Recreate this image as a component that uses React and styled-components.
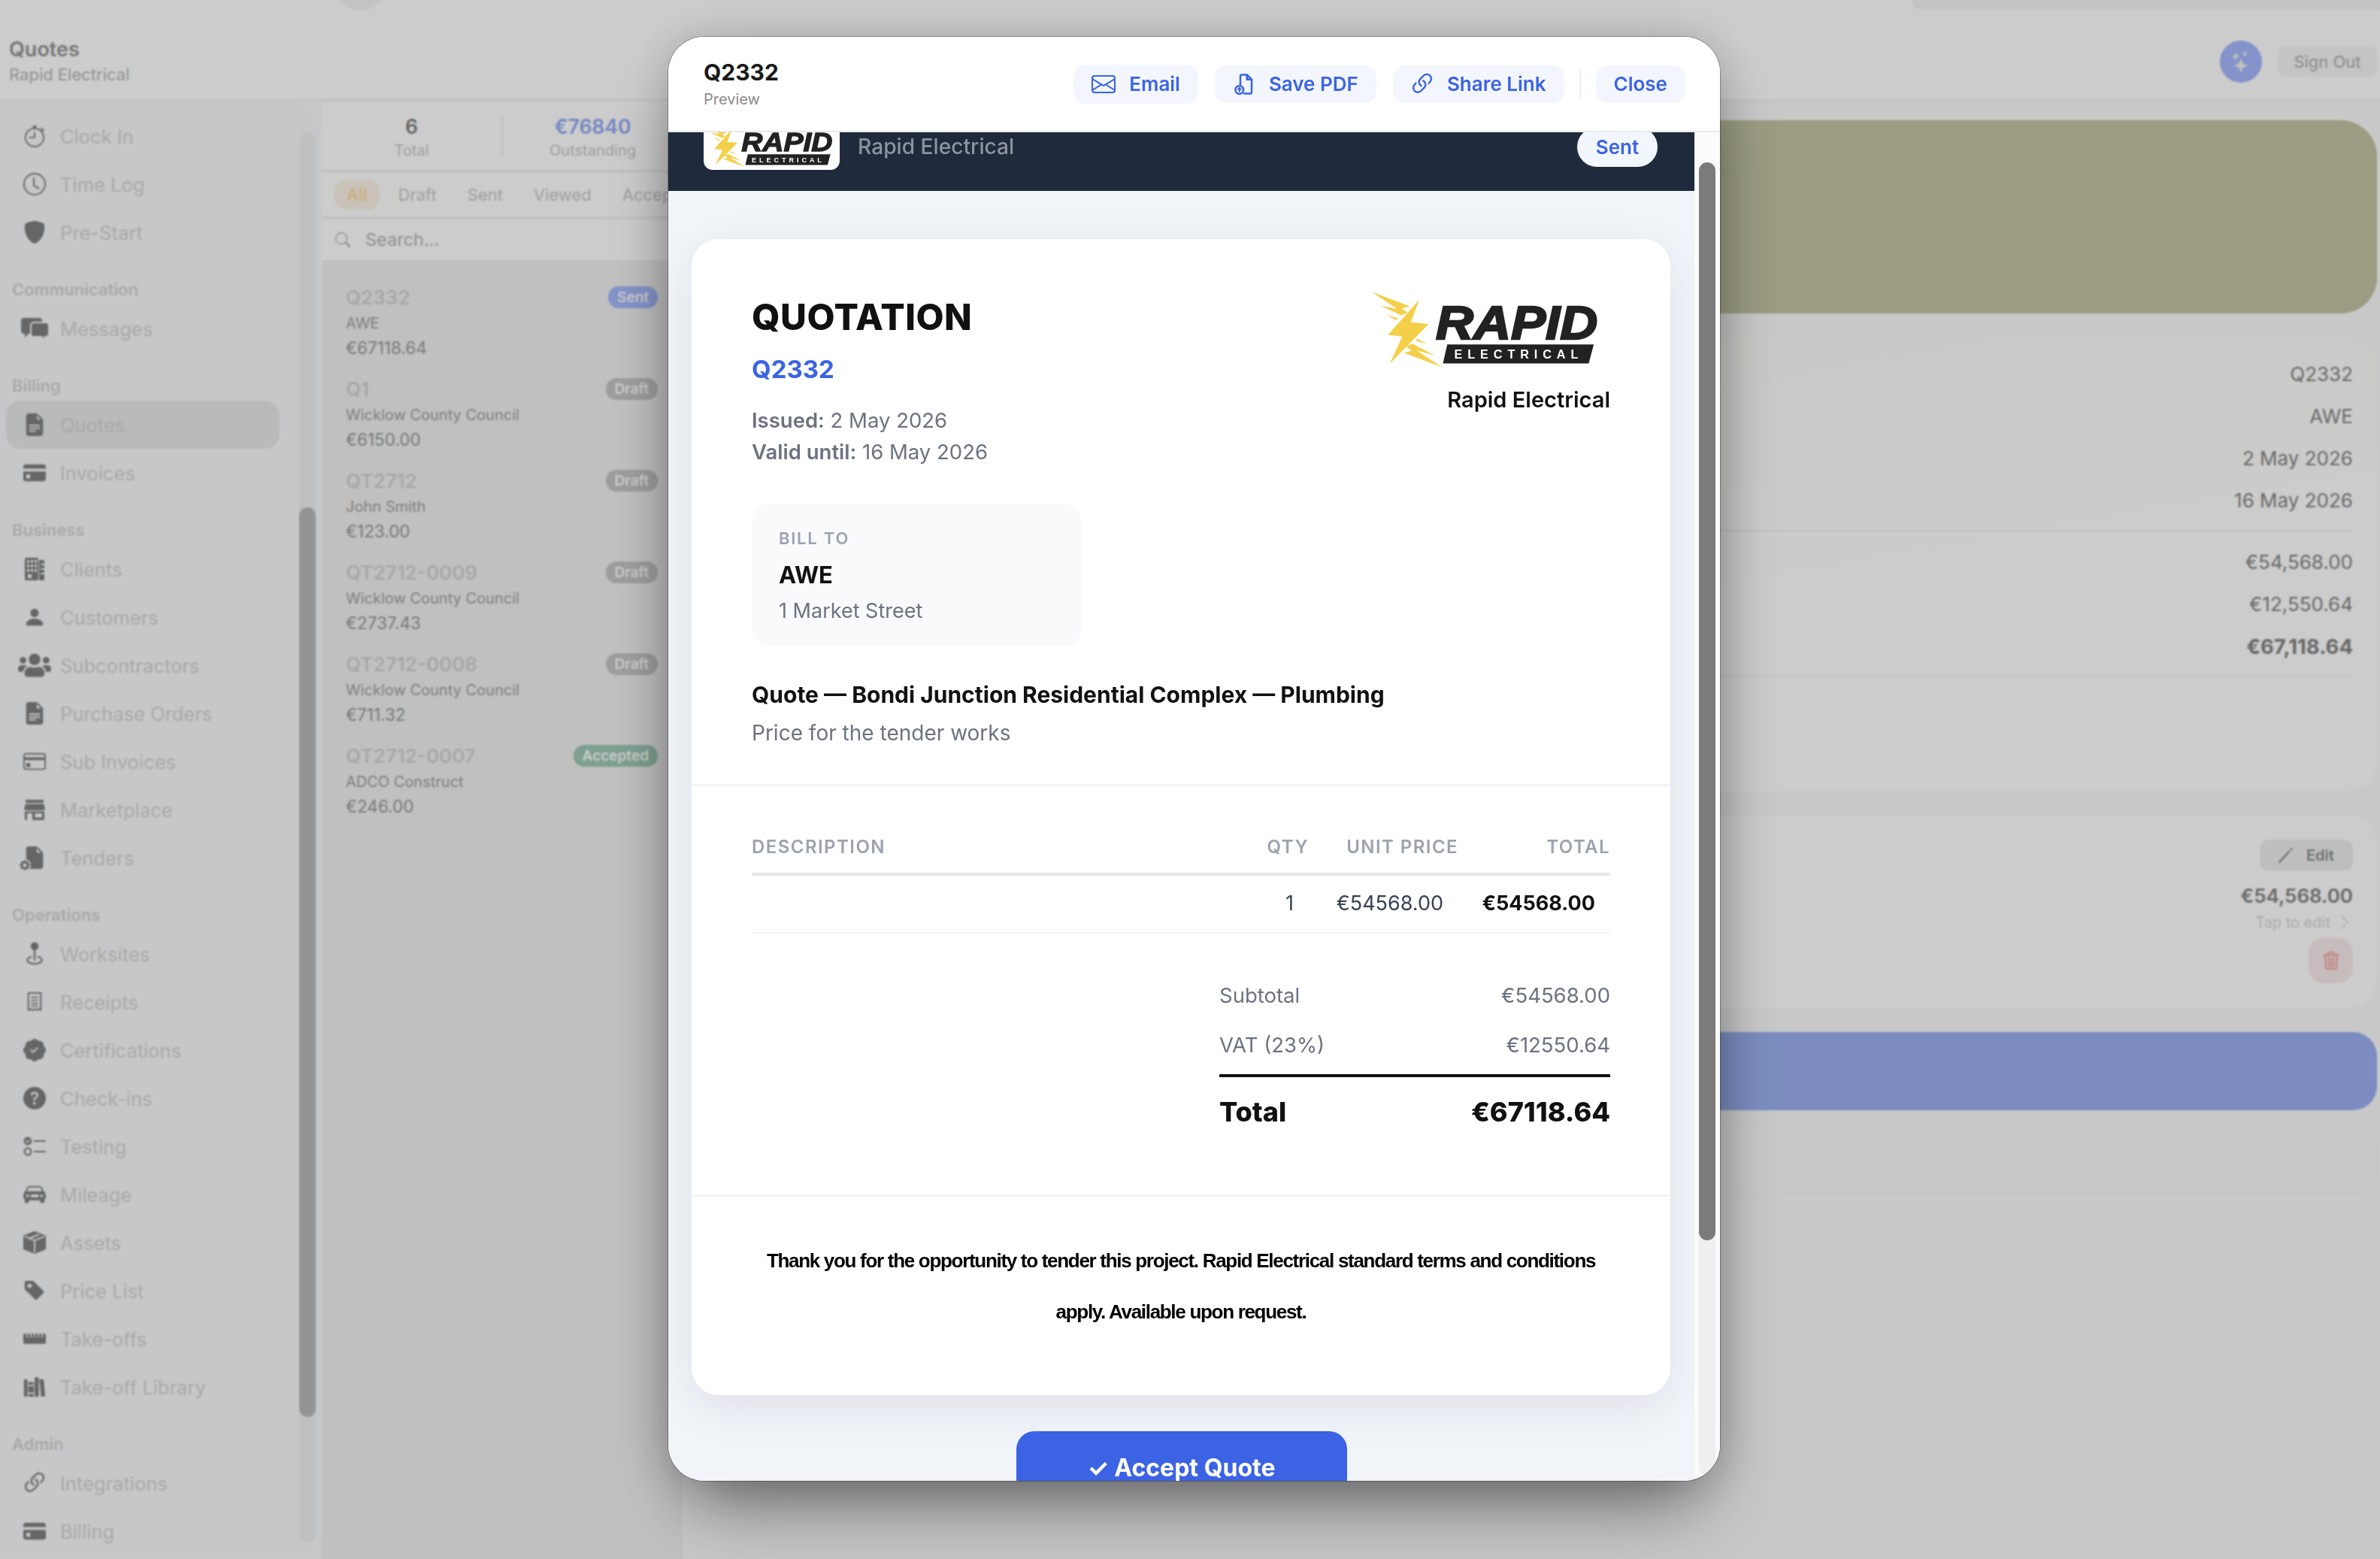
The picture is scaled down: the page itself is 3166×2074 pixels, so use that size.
import React from "react";
import styled, { createGlobalStyle } from "styled-components";
import {
  BsStopwatch,
  BsClock,
  BsShieldFill,
  BsFileEarmarkTextFill,
  BsCreditCardFill,
  BsPersonFill,
  BsCreditCard,
  BsFileEarmarkFill,
  BsGearFill,
  BsPatchCheckFill,
  BsQuestionCircleFill,
  BsCarFrontFill,
  BsBoxSeamFill,
  BsTagFill,
  BsLink45Deg,
  BsSearch,
  BsStars,
  BsTrash3,
  BsChevronRight,
  BsEnvelope,
} from "react-icons/bs";
import { FaUsers, FaRulerHorizontal } from "react-icons/fa";
import { IoLibrary } from "react-icons/io5";

const SIDE_BG = "#f8f9fa";

const TenderIcon = () => (
  <TenderWrap>
    <BsFileEarmarkFill />
    <TenderGear>
      <BsGearFill />
    </TenderGear>
  </TenderWrap>
);

const ChatIcon = () => (
  <svg width="37" height="29" viewBox="0 0 37 29" fill="currentColor">
    <path d="M4 0h20a4 4 0 0 1 4 4v13a4 4 0 0 1-4 4H10l-5 5v-5H4a4 4 0 0 1-4-4V4a4 4 0 0 1 4-4z" />
    <path
      d="M17 6h16a4 4 0 0 1 4 4v11a4 4 0 0 1-4 4h-1v4l-5-4H17a4 4 0 0 1-4-4V10a4 4 0 0 1 4-4z"
      stroke={SIDE_BG}
      strokeWidth="2"
    />
  </svg>
);

const BuildingIcon = () => (
  <svg width="26" height="30" viewBox="0 0 26 30" fill="currentColor">
    <rect x="0" y="0" width="18" height="30" rx="2" />
    <rect x="19" y="3" width="7" height="27" rx="1.5" />
    <g fill={SIDE_BG}>
      {[3, 8, 13].map((x) =>
        [3, 9, 15].map((y) => <rect key={`${x}-${y}`} x={x} y={y} width="3" height="3.6" />)
      )}
      <rect x="4" y="22" width="5" height="5" />
      <rect x="21.5" y="8" width="4.5" height="2" />
      <rect x="21.5" y="14" width="4.5" height="2" />
      <rect x="21.5" y="20" width="4.5" height="2" />
    </g>
  </svg>
);

const StoreIcon = () => (
  <svg width="28" height="27" viewBox="0 0 28 27" fill="currentColor">
    <rect x="2" y="0" width="24" height="4" rx="1" />
    <path d="M2 5.5h24l2 6.5a3 3 0 0 1-4.7 1.6 3.6 3.6 0 0 1-4.7 0 3.6 3.6 0 0 1-4.6 0 3.6 3.6 0 0 1-4.7 0 3.6 3.6 0 0 1-4.6 0A3 3 0 0 1 0 12z" />
    <path fillRule="evenodd" d="M1 15.5h26V25a2 2 0 0 1-2 2H3a2 2 0 0 1-2-2zM4 18v9h7v-9zM14.5 18v5.5H24V18z" />
  </svg>
);

const PinIcon = () => (
  <svg width="28" height="32" viewBox="0 0 24 28" fill="none" stroke="currentColor" strokeWidth="2" strokeLinecap="round">
    <circle cx="12" cy="5" r="3.6" fill="currentColor" />
    <path d="M12 8.5V21" />
    <path d="M8 17.5c-3 .7-4.5 2-4.5 3.7 0 2.5 3.8 4.3 8.5 4.3s8.5-1.8 8.5-4.3c0-1.7-1.5-3-4.5-3.7" />
  </svg>
);

const ReceiptIcon = () => (
  <svg width="22" height="28" viewBox="0 0 24 30" fill="none" stroke="currentColor" strokeWidth="2.2" strokeLinejoin="round">
    <path d="M3 2h18v25l-3-2-3 2-3-2-3 2-3-2-3 2z" />
    <path d="M7 8h10M7 12.5h10M7 17h10M7 21h10" strokeWidth="1.8" />
  </svg>
);

const ChecksIcon = () => (
  <svg width="30" height="26" viewBox="0 0 30 26" fill="none" stroke="currentColor" strokeWidth="2.2" strokeLinecap="round">
    <circle cx="6" cy="6" r="5.4" fill="currentColor" stroke="none" />
    <path d="M3.6 6l1.9 1.9 3-3.4" stroke={SIDE_BG} strokeWidth="1.5" />
    <path d="M15 6h14M15 20h14" />
    <circle cx="6" cy="20" r="4.4" />
  </svg>
);

const navSections = [
  {
    items: [
      ["Clock In", <BsStopwatch />],
      ["Time Log", <BsClock />],
      ["Pre-Start", <BsShieldFill />],
    ],
  },
  { label: "Communication", items: [["Messages", <ChatIcon />]] },
  {
    label: "Billing",
    items: [
      ["Quotes", <BsFileEarmarkTextFill />, true],
      ["Invoices", <BsCreditCardFill />],
    ],
  },
  {
    label: "Business",
    items: [
      ["Clients", <BuildingIcon />],
      ["Customers", <BsPersonFill />],
      ["Subcontractors", <FaUsers style={{ fontSize: 48 }} />],
      ["Purchase Orders", <BsFileEarmarkTextFill />],
      ["Sub Invoices", <BsCreditCard />],
      ["Marketplace", <StoreIcon />],
      ["Tenders", <TenderIcon />],
    ],
  },
  {
    label: "Operations",
    items: [
      ["Worksites", <PinIcon />],
      ["Receipts", <ReceiptIcon />],
      ["Certifications", <BsPatchCheckFill />],
      ["Check-ins", <BsQuestionCircleFill />],
      ["Testing", <ChecksIcon />],
      ["Mileage", <BsCarFrontFill />],
      ["Assets", <BsBoxSeamFill />],
      ["Price List", <BsTagFill />],
      ["Take-offs", <FaRulerHorizontal />],
      ["Take-off Library", <IoLibrary />],
    ],
  },
  {
    label: "Admin",
    items: [
      ["Integrations", <BsLink45Deg style={{ fontSize: 38 }} />],
      ["Billing", <BsCreditCardFill />],
    ],
  },
];

const quotes = [
  { ref: "Q2332", client: "AWE", amount: "€67118.64", status: "Sent" },
  { ref: "Q1", client: "Wicklow County Council", amount: "€6150.00", status: "Draft" },
  { ref: "QT2712", client: "John Smith", amount: "€123.00", status: "Draft" },
  { ref: "QT2712-0009", client: "Wicklow County Council", amount: "€2737.43", status: "Draft" },
  { ref: "QT2712-0008", client: "Wicklow County Council", amount: "€711.32", status: "Draft" },
  { ref: "QT2712-0007", client: "ADCO Construct", amount: "€246.00", status: "Accepted" },
];

const badgeColors = { Sent: "#a5b9fd", Draft: "#c6c6c6", Accepted: "#9ec9b3" };

const Logo = ({ width }) => (
  <svg width={width} viewBox="130 75 955 320" style={{ display: "block" }}>
    <g fill="#f4cf4a">
      <polygon points="330,115 205,255 262,262 213,368 367,212 296,205" />
      <polygon points="140,85 292,142 260,150 283,167 258,178 176,140 243,152" />
      <polygon points="200,175 245,190 238,198" />
      <polygon points="420,383 268,326 300,318 277,301 302,290 392,337 317,316" />
      <polygon points="360,293 315,278 322,270" />
    </g>
    <text
      x="395"
      y="270"
      fontFamily="'Liberation Sans', sans-serif"
      fontWeight="700"
      fontStyle="italic"
      fontSize="188"
      textLength="640"
      lengthAdjust="spacingAndGlyphs"
      fill="#222"
      stroke="#222"
      strokeWidth="7"
    >
      RAPID
    </text>
    <polygon points="440,293 1020,293 1000,368 423,368" fill="#222" />
    <text
      x="468"
      y="349"
      fontFamily="'Liberation Sans', sans-serif"
      fontWeight="700"
      fontSize="48"
      textLength="490"
      fill="#fff"
    >
      ELECTRICAL
    </text>
  </svg>
);

const SavePdfIcon = () => (
  <svg width="30" height="30" viewBox="0 0 24 24" fill="none" stroke="currentColor" strokeWidth="2" strokeLinecap="round" strokeLinejoin="round">
    <path d="M8 13V3.5A1.5 1.5 0 0 1 9.5 2H15l5 5v13.5a1.5 1.5 0 0 1-1.5 1.5H12" />
    <path d="M15 2v5h5" />
    <circle cx="7" cy="18" r="4.3" />
    <path d="M7 20v-4M5.5 17.5L7 16l1.5 1.5" strokeWidth="1.5" />
  </svg>
);

const PencilIcon = () => (
  <svg width="24" height="24" viewBox="0 0 24 24" fill="none" stroke="currentColor" strokeWidth="2.4" strokeLinecap="round">
    <path d="M4 21L17 7" />
    <path d="M19.5 4.2l.8-.9" />
  </svg>
);

export default function App() {
  return (
    <>
      <GlobalStyle />
      <Page>
        <TopBar>
          <div>
            <PageTitle>Quotes</PageTitle>
            <PageSub>Rapid Electrical</PageSub>
          </div>
          <TopActions>
            <AiButton>
              <BsStars />
            </AiButton>
            <SignOut>Sign Out</SignOut>
          </TopActions>
        </TopBar>

        <Workspace>
          <Sidebar>
            <NavList>
              {navSections.map((section, i) => (
                <section key={i}>
                  {section.label && <NavLabel>{section.label}</NavLabel>}
                  {section.items.map(([name, icon, active]) => (
                    <NavItem key={name} $active={active}>
                      <NavIcon>{icon}</NavIcon>
                      {name}
                    </NavItem>
                  ))}
                </section>
              ))}
            </NavList>
            <SideTrack>
              <SideThumb />
            </SideTrack>
          </Sidebar>

          <ListPanel>
            <Stats>
              <Stat>
                <StatValue>6</StatValue>
                <StatLabel>Total</StatLabel>
              </Stat>
              <StatDivider />
              <Stat>
                <StatValue $blue>€76840</StatValue>
                <StatLabel>Outstanding</StatLabel>
              </Stat>
            </Stats>
            <Filters>
              <Filter $active>All</Filter>
              <Filter>Draft</Filter>
              <Filter>Sent</Filter>
              <Filter>Viewed</Filter>
              <Filter>Accepted</Filter>
            </Filters>
            <SearchRow>
              <BsSearch />
              Search...
            </SearchRow>
            <QuoteList>
              {quotes.map((q) => (
                <QuoteItem key={q.ref}>
                  <QuoteHead>
                    <QuoteRef>{q.ref}</QuoteRef>
                    <Badge $bg={badgeColors[q.status]}>{q.status}</Badge>
                  </QuoteHead>
                  <QuoteClient>{q.client}</QuoteClient>
                  <QuoteAmount>{q.amount}</QuoteAmount>
                </QuoteItem>
              ))}
            </QuoteList>
          </ListPanel>

          <Main>
            <Hero />
            <InfoCard>
              <InfoRow>Q2332</InfoRow>
              <InfoRow>AWE</InfoRow>
              <InfoRow>2 May 2026</InfoRow>
              <InfoRow>16 May 2026</InfoRow>
              <InfoDivider />
              <InfoRow>€54,568.00</InfoRow>
              <InfoRow>€12,550.64</InfoRow>
              <InfoRow $bold>€67,118.64</InfoRow>
              <InfoDivider />
            </InfoCard>
            <LineCard>
              <EditButton>
                <PencilIcon />
                Edit
              </EditButton>
              <LinePrice>€54,568.00</LinePrice>
              <TapHint>
                Tap to edit <BsChevronRight />
              </TapHint>
              <DeleteButton>
                <BsTrash3 />
              </DeleteButton>
            </LineCard>
            <BlueBar />
            <GhostCard />
          </Main>
        </Workspace>
      </Page>

      <Overlay>
        <Modal>
          <ModalHeader>
            <div>
              <ModalTitle>Q2332</ModalTitle>
              <ModalSub>Preview</ModalSub>
            </div>
            <ModalActions>
              <ActionButton>
                <BsEnvelope />
                Email
              </ActionButton>
              <ActionButton>
                <SavePdfIcon />
                Save PDF
              </ActionButton>
              <ActionButton>
                <LinkGlyph>
                  <BsLink45Deg />
                </LinkGlyph>
                Share Link
              </ActionButton>
              <ActionDivider />
              <ActionButton>Close</ActionButton>
            </ModalActions>
          </ModalHeader>

          <ModalBody>
            <Scroller>
              <Banner>
                <LogoTile>
                  <Logo width={181} />
                </LogoTile>
                <BannerName>Rapid Electrical</BannerName>
                <StatusPill>Sent</StatusPill>
              </Banner>

              <QuoteCard>
                <CardTop>
                  <TopRow>
                    <div>
                      <DocTitle>QUOTATION</DocTitle>
                      <DocRef>Q2332</DocRef>
                      <DocMeta>
                        <b>Issued:</b> 2 May 2026
                        <br />
                        <b>Valid until:</b> 16 May 2026
                      </DocMeta>
                    </div>
                    <Issuer>
                      <Logo width={321} />
                      <IssuerName>Rapid Electrical</IssuerName>
                    </Issuer>
                  </TopRow>
                  <BillBox>
                    <BillLabel>BILL TO</BillLabel>
                    <BillName>AWE</BillName>
                    <BillAddress>1 Market Street</BillAddress>
                  </BillBox>
                  <JobTitle>Quote — Bondi Junction Residential Complex — Plumbing</JobTitle>
                  <JobDesc>Price for the tender works</JobDesc>
                </CardTop>

                <CardMiddle>
                  <TableHead>
                    <span>DESCRIPTION</span>
                    <HeadNum>QTY</HeadNum>
                    <HeadNum>UNIT PRICE</HeadNum>
                    <HeadNum>TOTAL</HeadNum>
                  </TableHead>
                  <TableRow>
                    <span />
                    <RowNum>1</RowNum>
                    <RowNum>€54568.00</RowNum>
                    <RowNum $strong>€54568.00</RowNum>
                  </TableRow>
                  <Totals>
                    <TotalLine>
                      <span>Subtotal</span>
                      <span>€54568.00</span>
                    </TotalLine>
                    <TotalLine>
                      <span>VAT (23%)</span>
                      <span>€12550.64</span>
                    </TotalLine>
                    <GrandTotal>
                      <span>Total</span>
                      <span>€67118.64</span>
                    </GrandTotal>
                  </Totals>
                </CardMiddle>

                <CardFooter>
                  Thank you for the opportunity to tender this project. Rapid Electrical standard terms and
                  conditions apply. Available upon request.
                </CardFooter>
              </QuoteCard>

              <AcceptButton>✓ Accept Quote</AcceptButton>
            </Scroller>

            <Gutter>
              <GutterTrack>
                <GutterThumb />
              </GutterTrack>
            </Gutter>
          </ModalBody>
        </Modal>
      </Overlay>
    </>
  );
}

const GlobalStyle = createGlobalStyle`
  html, body {
    margin: 0;
    height: 100%;
    overflow: hidden;
    background: #fafafa;
    font-family: Inter, "Noto Sans", sans-serif;
  }
  * {
    box-sizing: border-box;
  }
`;

const Page = styled.div`
  display: flex;
  flex-direction: column;
  height: 100vh;
`;

const TopBar = styled.header`
  position: relative;
  flex: none;
  display: flex;
  align-items: center;
  justify-content: space-between;
  height: 135px;
  padding: 32px 4px 0 12px;
  background: #fff;
  border-bottom: 3px solid #f2f2f2;

  &::before {
    content: "";
    position: absolute;
    top: -56px;
    left: 445px;
    width: 70px;
    height: 70px;
    border-radius: 50%;
    background: #f4f4f4;
  }

  &::after {
    content: "";
    position: absolute;
    top: 0;
    right: 0;
    width: 623px;
    height: 13px;
    border-radius: 0 0 0 26px;
    background: #f6f6f6;
  }
`;

const PageTitle = styled.div`
  font-size: 27px;
  line-height: 34px;
  font-weight: 600;
  color: #949494;
`;

const PageSub = styled.div`
  font-size: 22px;
  line-height: 32px;
  color: #b7b7b7;
`;

const TopActions = styled.div`
  display: flex;
  align-items: center;
  gap: 21px;
`;

const AiButton = styled.div`
  display: flex;
  align-items: center;
  justify-content: center;
  width: 56px;
  height: 56px;
  border-radius: 50%;
  background: #a5b9fd;
  color: #f0f0f0;
  font-size: 28px;
`;

const SignOut = styled.div`
  width: 132px;
  height: 40px;
  border-radius: 10px;
  background: #f5f5f5;
  color: #aeaeae;
  font-size: 22px;
  line-height: 40px;
  text-align: center;
`;

const Workspace = styled.div`
  flex: 1;
  display: flex;
  min-height: 0;
`;

const Sidebar = styled.aside`
  flex: none;
  display: flex;
  width: 428px;
  height: 1935px;
  padding-top: 14px;
  background: ${SIDE_BG};
  border-right: 2px solid #fcfcfd;
  border-radius: 0 40px 40px 0;
  overflow: hidden;
`;

const NavList = styled.nav`
  flex: 1;
  min-width: 0;
  padding: 0 26px 0 8px;
`;

const NavLabel = styled.div`
  height: 40px;
  margin-top: 24px;
  padding-left: 8px;
  color: #d3d4d4;
  font-size: 22px;
  font-weight: 600;
  line-height: 40px;
  white-space: nowrap;
`;

const NavItem = styled.div`
  display: flex;
  align-items: center;
  gap: 12px;
  height: 64px;
  padding-left: 16px;
  border-radius: 20px;
  background: ${(p) => (p.$active ? "#e8e9e9" : "transparent")};
  color: #d3d4d4;
  font-size: 25.5px;
  white-space: nowrap;
`;

const NavIcon = styled.span`
  flex: none;
  display: flex;
  align-items: center;
  justify-content: center;
  width: 44px;
  color: #808080;
  font-size: 30px;
`;

const TenderWrap = styled.span`
  position: relative;
  display: flex;
`;

const TenderGear = styled.span`
  position: absolute;
  left: -6px;
  bottom: -3px;
  display: flex;
  padding: 1px;
  border-radius: 50%;
  background: ${SIDE_BG};
  font-size: 14px;
`;

const SideTrack = styled.div`
  flex: none;
  width: 22px;
  height: 1876px;
  margin: 27px 6px 0 0;
  border-radius: 11px;
  background: #f0f1f2;
`;

const SideThumb = styled.div`
  width: 22px;
  height: 1210px;
  margin-top: 499px;
  border-radius: 11px;
  background: #bababa;
`;

const ListPanel = styled.section`
  flex: none;
  display: flex;
  flex-direction: column;
  width: 480px;
  background: #f0f1f0;
`;

const Stats = styled.div`
  flex: none;
  display: flex;
  align-items: center;
  height: 94px;
  padding-top: 1px;
  background: #fff;
  border-bottom: 3px solid #eee;
`;

const Stat = styled.div`
  flex: 1;
  text-align: center;
`;

const StatValue = styled.div`
  font-size: 26.5px;
  line-height: 36px;
  font-weight: 600;
  color: ${(p) => (p.$blue ? "#92a9f5" : "#808080")};
`;

const StatLabel = styled.div`
  margin-top: 1px;
  color: #c8c8c8;
  font-size: 20px;
  line-height: 26px;
`;

const StatDivider = styled.div`
  flex: none;
  width: 2px;
  height: 56px;
  background: #eee;
`;

const Filters = styled.div`
  flex: none;
  display: flex;
  align-items: center;
  gap: 9px;
  height: 62px;
  padding-left: 17px;
  background: #fff;
  border-bottom: 3px solid #eee;
  overflow: hidden;
`;

const Filter = styled.span`
  padding: 0 16px;
  height: 40px;
  border-radius: 16px;
  background: ${(p) => (p.$active ? "#fbf3e6" : "transparent")};
  color: ${(p) => (p.$active ? "#ffd9a5" : "#c8c8c8")};
  font-size: 22px;
  font-weight: ${(p) => (p.$active ? 600 : 400)};
  line-height: 40px;
`;

const SearchRow = styled.div`
  flex: none;
  display: flex;
  align-items: center;
  gap: 20px;
  height: 55px;
  padding-left: 18px;
  background: #fff;
  color: #b3b3b3;
  font-size: 23.5px;

  svg {
    font-size: 20px;
  }
`;

const QuoteList = styled.div`
  flex: 1;
  padding: 20px 33px 0 32px;
`;

const QuoteItem = styled.div`
  height: 122px;
  padding-top: 13px;
`;

const QuoteHead = styled.div`
  display: flex;
  align-items: center;
  justify-content: space-between;
  height: 32px;
`;

const QuoteRef = styled.span`
  color: #d2d3d3;
  font-size: 26px;
  font-weight: 600;
`;

const Badge = styled.span`
  height: 29px;
  padding: 0 12px;
  border-radius: 14px;
  background: ${(p) => p.$bg};
  color: #fff;
  font-size: 19px;
  font-weight: 600;
  line-height: 29px;
`;

const QuoteClient = styled.div`
  margin-top: 4px;
  color: #a0a0a0;
  font-size: 20px;
  line-height: 30px;
`;

const QuoteAmount = styled.div`
  margin-top: 3px;
  color: #989898;
  font-size: 22.5px;
  line-height: 30px;
`;

const Main = styled.main`
  flex: 1;
  display: flex;
  flex-direction: column;
  min-width: 0;
  padding: 25px 4px 0 22px;
  background: #fafafa;
`;

const Hero = styled.div`
  flex: none;
  height: 257px;
  border-radius: 48px;
  background: #c2c3a3;
`;

const InfoCard = styled.div`
  flex: none;
  height: 604px;
  margin-top: 32px;
  padding: 21px 32px 0;
  border-radius: 40px;
  background: linear-gradient(170deg, #fbfcf4 0%, #fdfdfb 35%, #fff 60%);
`;

const InfoRow = styled.div`
  height: 56px;
  color: #858585;
  font-size: ${(p) => (p.$bold ? "27.5px" : "26px")};
  font-weight: ${(p) => (p.$bold ? 700 : 400)};
  line-height: 56px;
  text-align: right;
`;

const InfoDivider = styled.div`
  height: 2px;
  margin: 11px 0 13px;
  background: #f1f1f1;
`;

const LineCard = styled.div`
  flex: none;
  display: flex;
  flex-direction: column;
  align-items: flex-end;
  height: 257px;
  margin-top: 31px;
  padding: 33px 32px 0;
  border-radius: 40px;
  background: #fff;
`;

const EditButton = styled.div`
  display: flex;
  align-items: center;
  gap: 16px;
  width: 124px;
  height: 41px;
  padding-left: 22px;
  border-radius: 12px;
  background: #eee;
  color: #8c8c8c;
  font-size: 20px;
  font-weight: 600;
`;

const LinePrice = styled.div`
  margin-top: 16px;
  color: #858585;
  font-size: 26px;
  font-weight: 600;
  line-height: 36px;
`;

const TapHint = styled.div`
  display: flex;
  align-items: center;
  gap: 8px;
  margin-top: 2px;
  color: #d8d8d8;
  font-size: 20px;
  line-height: 30px;

  svg {
    font-size: 22px;
  }
`;

const DeleteButton = styled.div`
  display: flex;
  align-items: center;
  justify-content: center;
  width: 59px;
  height: 60px;
  margin-top: 6px;
  border-radius: 20px;
  background: #f7ecea;
  color: #f28c8c;
  font-size: 24px;
`;

const BlueBar = styled.div`
  flex: none;
  height: 104px;
  margin-top: 32px;
  border-radius: 32px;
  background: #9bb0f0;
`;

const GhostCard = styled.div`
  flex: none;
  height: 95px;
  margin-top: 16px;
  border: 2px solid #f6f6f6;
  border-radius: 32px;
`;

const Overlay = styled.div`
  position: fixed;
  inset: 0;
  display: flex;
  justify-content: center;
  align-items: flex-start;
  padding: 49px 0 0 11px;
  background: rgba(0, 0, 0, 0.2);
  backdrop-filter: blur(1px);
`;

const Modal = styled.div`
  display: flex;
  flex-direction: column;
  width: 1399px;
  height: 1921px;
  border-radius: 48px;
  background: #fff;
  box-shadow: 0 50px 100px -24px rgba(0, 0, 0, 0.5), 0 0 60px rgba(0, 0, 0, 0.16), 0 0 0 1px rgba(0, 0, 0, 0.28);
  overflow: hidden;
`;

const ModalHeader = styled.div`
  flex: none;
  display: flex;
  align-items: center;
  justify-content: space-between;
  height: 127px;
  padding: 0 46px 0 47px;
  background: #fff;
  border-bottom: 2px solid #e9e9e9;
`;

const ModalTitle = styled.div`
  color: #1a1a1a;
  font-size: 30px;
  font-weight: 700;
  line-height: 36px;
`;

const ModalSub = styled.div`
  margin-top: 4px;
  color: #8a8a8a;
  font-size: 20px;
  line-height: 28px;
`;

const ModalActions = styled.div`
  display: flex;
  align-items: center;
  gap: 22px;
`;

const ActionButton = styled.button`
  display: flex;
  align-items: center;
  gap: 18px;
  min-height: 48px;
  padding: 10px 24px;
  border: 0;
  border-radius: 16px;
  background: #f3f6fe;
  color: #3b63e4;
  font-family: inherit;
  font-size: 26px;
  font-weight: 600;
  line-height: 30px;

  > svg {
    font-size: 32px;
  }
`;

const LinkGlyph = styled.span`
  display: flex;
  margin: -4px;
  font-size: 38px;
`;

const ActionDivider = styled.div`
  width: 2px;
  height: 40px;
  margin: 0 -2px;
  background: #eceef2;
`;

const ModalBody = styled.div`
  flex: 1;
  display: flex;
  min-height: 0;
`;

const Scroller = styled.div`
  flex: 1;
  min-width: 0;
  display: flex;
  flex-direction: column;
  overflow: hidden;
  background: #f1f4f9;
`;

const Banner = styled.div`
  flex: none;
  display: flex;
  align-items: center;
  gap: 24px;
  margin-top: -40px;
  padding: 28px 49px 28px 47px;
  background: #1f2a3c;
`;

const LogoTile = styled.div`
  flex: none;
  width: 181px;
  height: 62px;
  border-radius: 12px;
  background: #fff;
  overflow: hidden;
`;

const BannerName = styled.div`
  flex: 1;
  color: #8d94a1;
  font-size: 28.2px;
  font-weight: 500;
`;

const StatusPill = styled.div`
  width: 107px;
  height: 53px;
  border-radius: 27px;
  background: #f2f6ff;
  color: #3b63e4;
  font-size: 26px;
  font-weight: 600;
  line-height: 53px;
  text-align: center;
`;

const QuoteCard = styled.article`
  flex: none;
  margin: 64px 32px 0 31px;
  height: 1538px;
  border-radius: 36px;
  background: #fff;
  box-shadow: 0 16px 60px rgba(30, 40, 60, 0.09);
`;

const CardTop = styled.div`
  padding: 72px 80px 48px;
  border-bottom: 3px solid #f1f4f9;
`;

const TopRow = styled.div`
  display: flex;
  justify-content: space-between;
  align-items: flex-start;
`;

const DocTitle = styled.h1`
  margin: 0;
  color: #111;
  font-size: 48px;
  font-weight: 800;
  letter-spacing: 0.5px;
  line-height: 64px;
`;

const DocRef = styled.div`
  margin-top: 17px;
  color: #3b63e4;
  font-size: 33px;
  font-weight: 700;
  line-height: 40px;
`;

const DocMeta = styled.div`
  margin-top: 27px;
  color: #6b7280;
  font-size: 27.5px;
  line-height: 42px;

  b {
    font-weight: 600;
  }
`;

const Issuer = styled.div`
  display: flex;
  flex-direction: column;
  align-items: flex-end;
  margin-top: -5px;
`;

const IssuerName = styled.div`
  margin-top: 21px;
  color: #111;
  font-size: 29px;
  font-weight: 600;
  line-height: 36px;
`;

const BillBox = styled.div`
  width: 439px;
  height: 190px;
  margin-top: 48px;
  padding: 32px 36px 0;
  border-radius: 24px;
  background: #f9fafc;
`;

const BillLabel = styled.div`
  color: #9ca3af;
  font-size: 22px;
  font-weight: 600;
  letter-spacing: 0.08em;
  line-height: 28px;
`;

const BillName = styled.div`
  margin-top: 15px;
  color: #111;
  font-size: 31px;
  font-weight: 700;
  line-height: 40px;
`;

const BillAddress = styled.div`
  margin-top: 10px;
  color: #6b7280;
  font-size: 27px;
  line-height: 36px;
`;

const JobTitle = styled.h2`
  margin: 42px 0 0;
  color: #111;
  font-size: 30px;
  font-weight: 700;
  line-height: 44px;
`;

const JobDesc = styled.p`
  margin: 9px 0 0;
  color: #6b7280;
  font-size: 28px;
  line-height: 40px;
`;

const CardMiddle = styled.div`
  padding: 65px 80px 88px;
  border-bottom: 3px solid #f1f4f9;
`;

const TableHead = styled.div`
  display: grid;
  grid-template-columns: 1fr 80px 199px 202px;
  padding-bottom: 18px;
  border-bottom: 4px solid #e5e7eb;
  color: #9ca3af;
  font-size: 24px;
  font-weight: 600;
  letter-spacing: 0.06em;
  line-height: 32px;
`;

const HeadNum = styled.span`
  text-align: right;
  white-space: nowrap;
`;

const TableRow = styled.div`
  display: grid;
  grid-template-columns: 1fr 80px 199px 202px;
  align-items: center;
  height: 77px;
  padding-bottom: 2px;
  border-bottom: 2px solid #f3f4f6;
`;

const RowNum = styled.span`
  padding-right: 20px;
  color: ${(p) => (p.$strong ? "#111" : "#374151")};
  font-size: 27px;
  font-weight: ${(p) => (p.$strong ? 700 : 400)};
  text-align: right;
`;

const Totals = styled.div`
  width: 520px;
  margin: 49px 0 0 auto;
`;

const TotalLine = styled.div`
  display: flex;
  justify-content: space-between;
  color: #6b7280;
  font-size: 27.5px;
  line-height: 66px;
`;

const GrandTotal = styled.div`
  display: flex;
  justify-content: space-between;
  margin-top: 6px;
  padding-top: 24px;
  border-top: 4px solid #111;
  color: #111;
  font-size: 36px;
  font-weight: 800;
  line-height: 44px;
`;

const CardFooter = styled.p`
  margin: 0;
  padding: 51px 80px 0;
  color: #000;
  font-family: "Liberation Sans", Arial, sans-serif;
  font-size: 26px;
  font-weight: 700;
  letter-spacing: -0.05em;
  line-height: 68px;
  text-align: center;
`;

const AcceptButton = styled.button`
  flex: none;
  align-self: center;
  width: 440px;
  height: 96px;
  margin-top: 48px;
  border: 0;
  border-radius: 24px;
  background: #3b63e4;
  color: #fff;
  font-family: inherit;
  font-size: 32px;
  font-weight: 700;
`;

const Gutter = styled.div`
  flex: none;
  width: 34px;
  padding: 6px 6px 41px;
  background: #fbfbfc;
`;

const GutterTrack = styled.div`
  height: 100%;
  border-radius: 11px;
  background: #efeff1;
`;

const GutterThumb = styled.div`
  height: 1434px;
  margin-top: 34px;
  border-radius: 11px;
  background: #7b7b7b;
`;
